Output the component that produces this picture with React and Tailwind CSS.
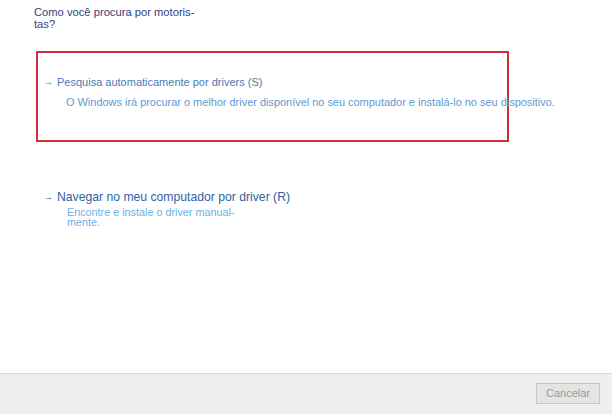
import React from 'react';

const App = () => {
    return (
        <div className="w-[612px] h-[414px] bg-white flex flex-col overflow-hidden" style={{ fontFamily: '"Liberation Sans", Arial, sans-serif' }}>
            <div className="flex-1 flex flex-col">
                <p className="ml-[34px] mt-[6px] text-[11.2px] leading-[12px] text-[#34427a]">
                    Como você procura por motoris-<br />tas?
                </p>

                <div className="ml-[36px] mt-[21px] w-[473px] h-[91px] border-2 border-[#cf2f3a] pt-[23px]">
                    <div className="flex items-center text-[11px] leading-[13px] text-[#4a7ab3]">
                        <span className="w-[19px] pl-[6px] text-[9px]">→</span>
                        <span>Pesquisa automaticamente por drivers (S)</span>
                    </div>
                    <p className="ml-[28px] mt-[7px] text-[10.95px] leading-[13px] text-[#5d9ad3] whitespace-nowrap">
                        O Windows irá procurar o melhor driver disponível no seu computador e instalá-lo no seu dispositivo.
                    </p>
                </div>

                <div className="ml-[38px] mt-[48px]">
                    <div className="flex items-center text-[12.2px] leading-[14px] text-[#2f62a5]">
                        <span className="w-[19px] pl-[6px] text-[9px]">→</span>
                        <span>Navegar no meu computador por driver (R)</span>
                    </div>
                    <p className="ml-[29px] mt-[3px] text-[10.8px] leading-[10px] text-[#6cb2e6]">
                        Encontre e instale o driver manual-<br />mente.
                    </p>
                </div>
            </div>

            <div className="h-[41px] border-t border-[#dcdcdc] bg-[#efefef] flex justify-end items-start pt-[9px] pr-[12px]">
                <button className="w-[64px] h-[21px] bg-[#e4e4e4] border border-[#c8c8c8] text-[11px] text-[#9a9a9a]">
                    Cancelar
                </button>
            </div>
        </div>
    );
};

export default App;
